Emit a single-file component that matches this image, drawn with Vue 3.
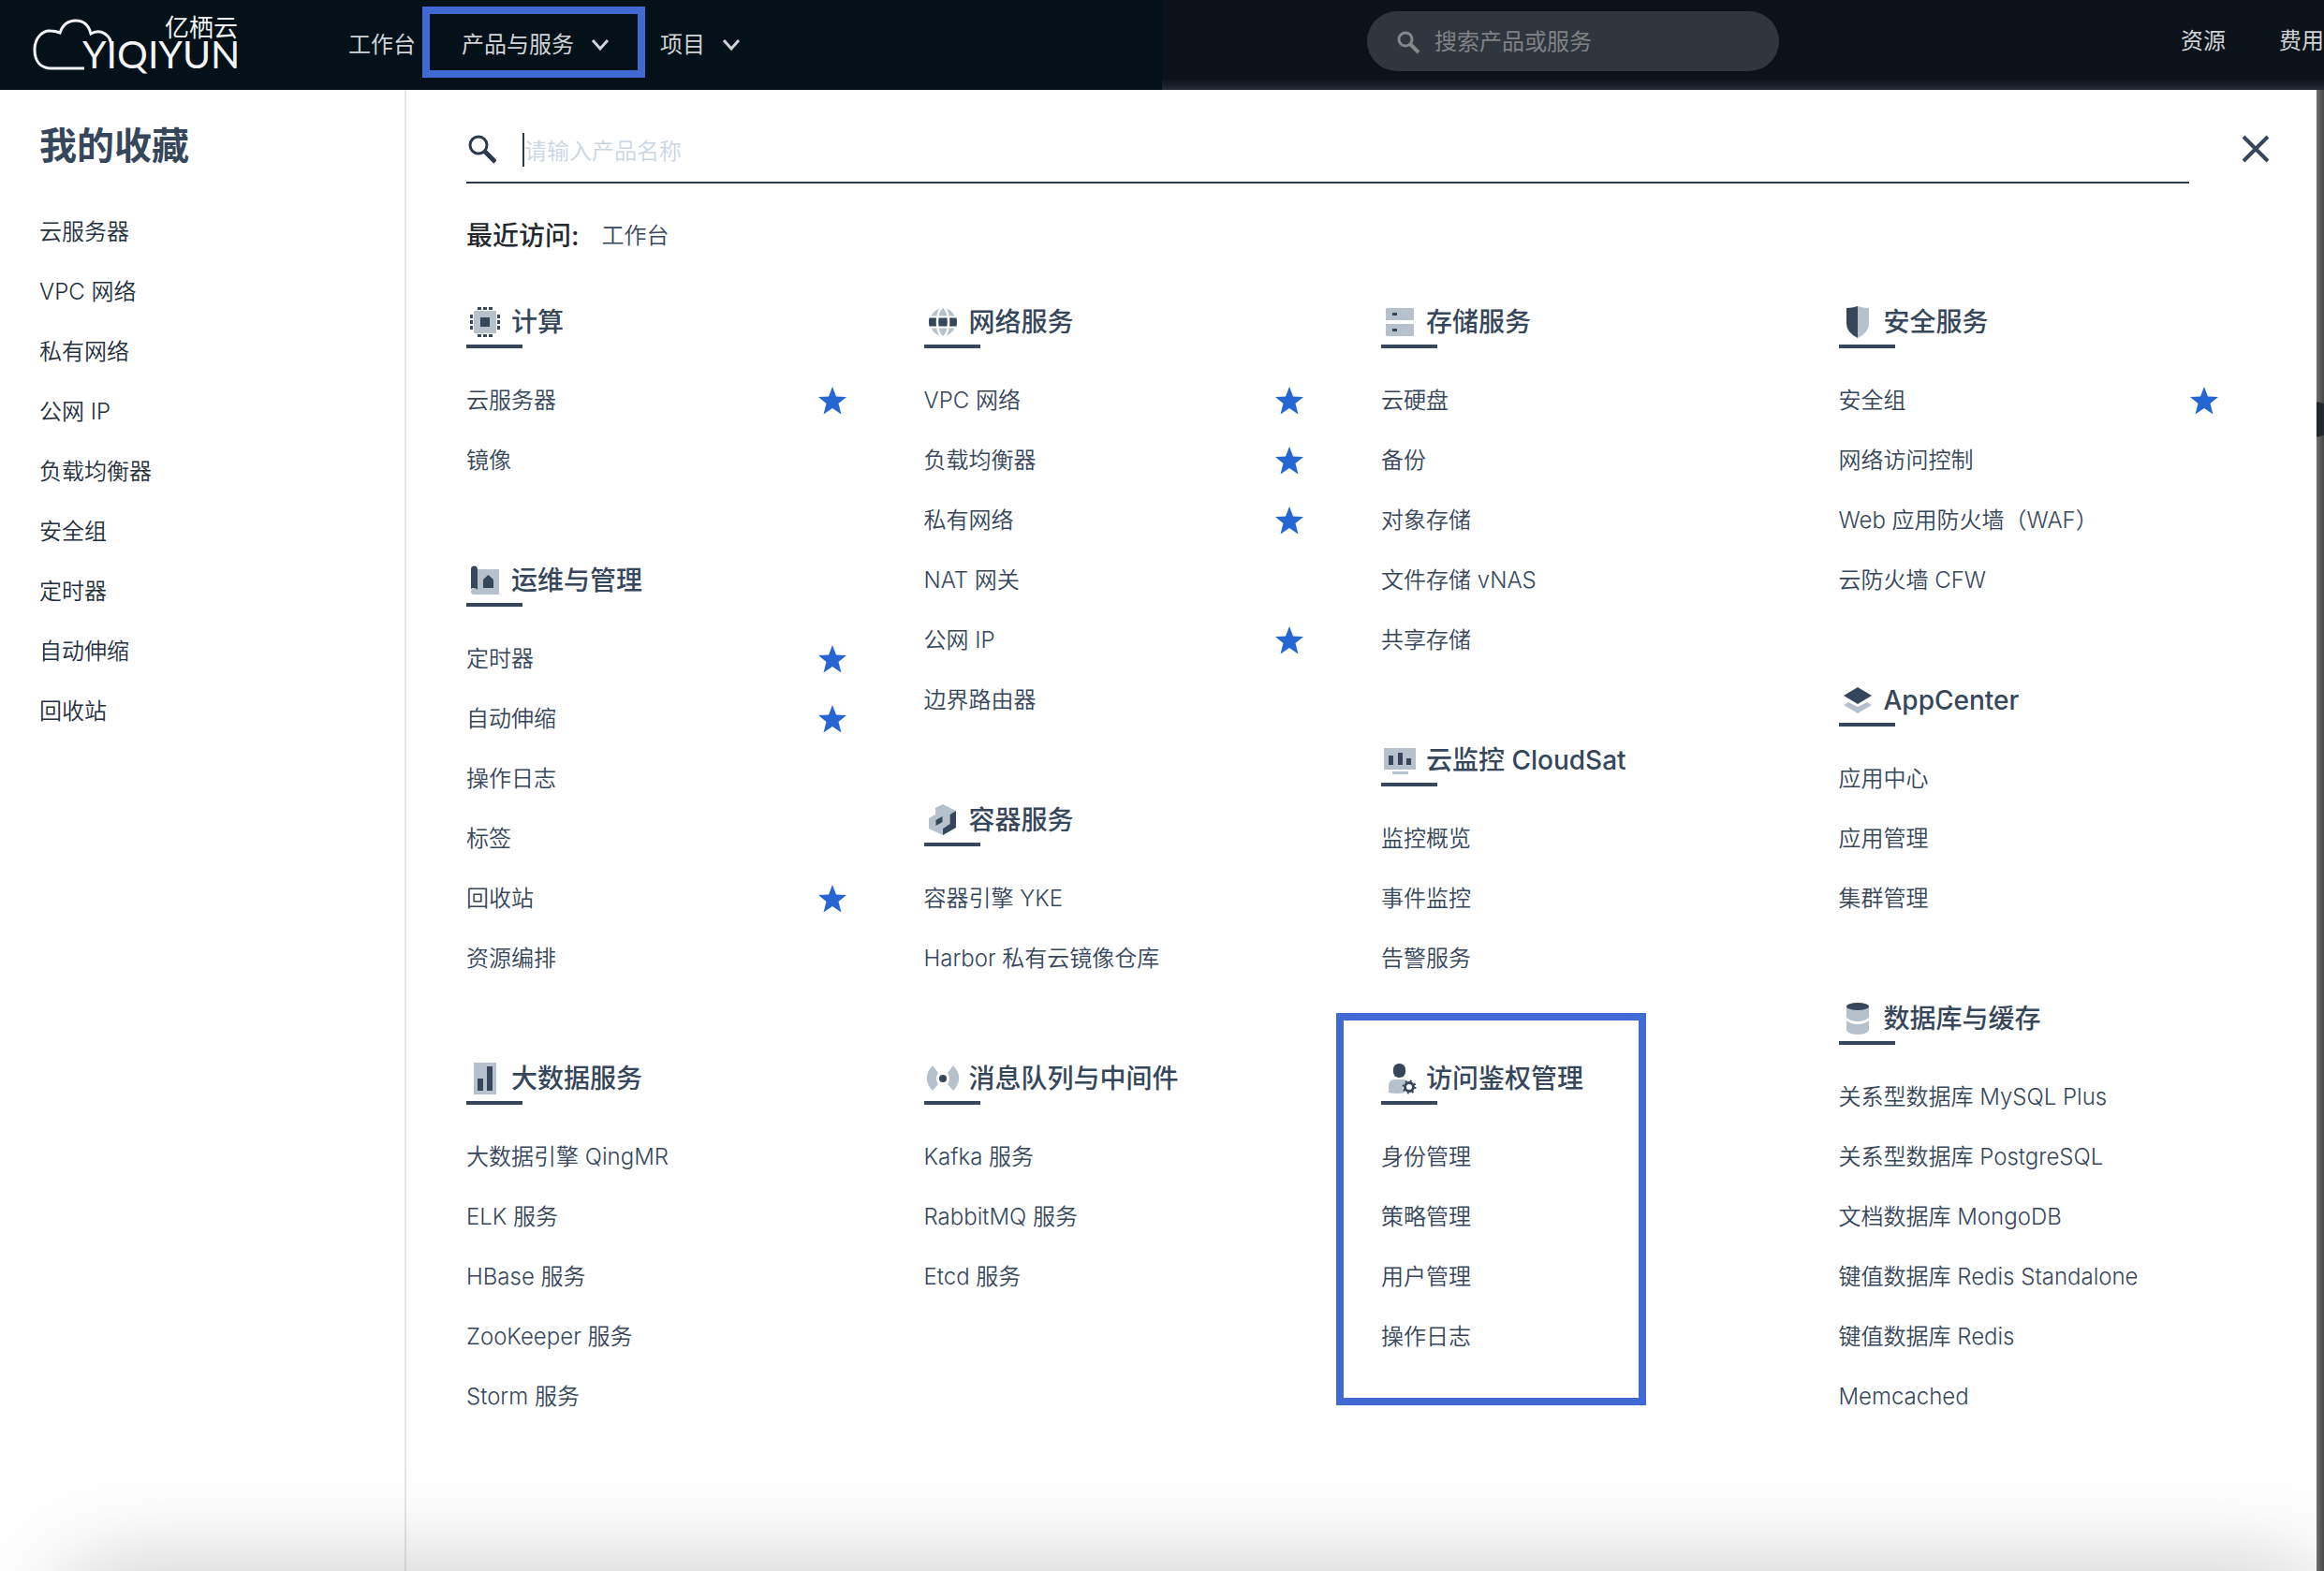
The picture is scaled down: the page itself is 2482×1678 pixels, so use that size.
<script setup>
import { ref } from 'vue'

const favorites = ['云服务器', 'VPC 网络', '私有网络', '公网 IP', '负载均衡器', '安全组', '定时器', '自动伸缩', '回收站']
const keyword = ref('')
const globalKeyword = ref('')

const columns = ref([
  [
    { icon: 'cpu', title: '计算', items: ['*云服务器', '镜像'] },
    { icon: 'ops', title: '运维与管理', items: ['*定时器', '*自动伸缩', '操作日志', '标签', '*回收站', '资源编排'] },
    { icon: 'bigdata', title: '大数据服务', items: ['大数据引擎 QingMR', 'ELK 服务', 'HBase 服务', 'ZooKeeper 服务', 'Storm 服务'] },
  ],
  [
    { icon: 'globe', title: '网络服务', items: ['*VPC 网络', '*负载均衡器', '*私有网络', 'NAT 网关', '*公网 IP', '边界路由器'] },
    { icon: 'container', title: '容器服务', items: ['容器引擎 YKE', 'Harbor 私有云镜像仓库'] },
    { icon: 'queue', title: '消息队列与中间件', items: ['Kafka 服务', 'RabbitMQ 服务', 'Etcd 服务'] },
  ],
  [
    { icon: 'storage', title: '存储服务', items: ['云硬盘', '备份', '对象存储', '文件存储 vNAS', '共享存储'] },
    { icon: 'monitor', title: '云监控 CloudSat', items: ['监控概览', '事件监控', '告警服务'] },
    { icon: 'user', title: '访问鉴权管理', items: ['身份管理', '策略管理', '用户管理', '操作日志'], marked: true },
  ],
  [
    { icon: 'shield', title: '安全服务', items: ['*安全组', '网络访问控制', 'Web 应用防火墙（WAF）', '云防火墙 CFW'] },
    { icon: 'layers', title: 'AppCenter', items: ['应用中心', '应用管理', '集群管理'] },
    { icon: 'database', title: '数据库与缓存', items: ['关系型数据库 MySQL Plus', '关系型数据库 PostgreSQL', '文档数据库 MongoDB', '键值数据库 Redis Standalone', '键值数据库 Redis', 'Memcached'] },
  ],
].map((column) => column.map((group) => ({
  ...group,
  items: group.items.map((text) => ({ name: text.replace('*', ''), starred: text.startsWith('*') })),
}))))
</script>

<template>
  <div class="page">
    <header class="topbar">
      <div class="brand-area">
        <a class="logo" href="#" aria-label="亿栖云">
          <svg width="224" height="96" viewBox="0 0 224 96" aria-hidden="true">
            <path d="M56 73H21C9 73 3 65 3 53C3 41 11 32 20 33Q25 33 30 35C33 26 39 22 47 22C56 22 61 28 63 36C73 30 85 37 85 50" fill="none" stroke="currentColor" stroke-width="3" />
            <text class="logo-latin" x="54" y="73">YIQIYUN</text>
            <text class="logo-cn" x="142" y="39">亿栖云</text>
          </svg>
        </a>
        <nav class="nav">
          <a href="#">工作台</a>
          <button class="nav-menu current" type="button">
            产品与服务
            <svg width="20" height="14" viewBox="0 0 20 14"><path d="M2 2l8 9 8-9" fill="none" stroke="currentColor" stroke-width="3" /></svg>
          </button>
          <button class="nav-menu" type="button">
            项目
            <svg width="20" height="14" viewBox="0 0 20 14"><path d="M2 2l8 9 8-9" fill="none" stroke="currentColor" stroke-width="3" /></svg>
          </button>
        </nav>
      </div>
      <div class="tools">
        <label class="global-search">
          <svg width="26" height="26" viewBox="0 0 26 26"><circle cx="9" cy="10" r="7" fill="none" stroke="currentColor" stroke-width="3" /><path d="M14 15l9 9" stroke="currentColor" stroke-width="4" /></svg>
          <input v-model="globalKeyword" type="text" placeholder="搜索产品或服务" aria-label="搜索产品或服务" />
        </label>
        <div class="links">
          <a href="#">资源</a>
          <a href="#">费用</a>
        </div>
      </div>
    </header>

    <div class="body">
      <div class="panel">
        <aside class="favorites">
          <h2>我的收藏</h2>
          <ul>
            <li v-for="name in favorites" :key="name"><a href="#">{{ name }}</a></li>
          </ul>
        </aside>

        <main class="catalog">
          <div class="search-row">
            <label class="product-search">
              <svg width="32" height="32" viewBox="0 0 32 32"><circle cx="13" cy="11" r="9" fill="none" stroke="currentColor" stroke-width="3" /><path d="M19 17l12 12" stroke="currentColor" stroke-width="5" /></svg>
              <span class="caret"></span>
              <input v-model="keyword" type="text" placeholder="请输入产品名称" aria-label="请输入产品名称" />
            </label>
            <button class="close" type="button" aria-label="关闭">
              <svg width="32" height="32" viewBox="0 0 32 32"><path d="M3 2l26 26M29 2L3 28" stroke="currentColor" stroke-width="4" /></svg>
            </button>
          </div>

          <p class="recent"><strong>最近访问:</strong><a href="#">工作台</a></p>

          <div class="columns">
            <div v-for="(column, index) in columns" :key="index" class="column">
              <section v-for="group in column" :key="group.title" class="group" :class="{ marked: group.marked }">
                <h3>
                  <svg class="icon" width="40" height="40" viewBox="0 0 40 40" aria-hidden="true">
                    <template v-if="group.icon === 'cpu'">
                      <path class="light" d="M8 8h24v24H8z" />
                      <path class="dark" d="M15 15h10v10H15zM12 4h4v3h-4zM18 4h4v3h-4zM24 4h4v3h-4zM12 33h4v3h-4zM18 33h4v3h-4zM24 33h4v3h-4zM4 12h3v4H4zM4 18h3v4H4zM4 24h3v4H4zM33 12h3v4h-3zM33 18h3v4h-3zM33 24h3v4h-3z" />
                    </template>
                    <template v-else-if="group.icon === 'ops'">
                      <path class="light" d="M11 8h24v27H8a3 3 0 0 1-3-3q0-3 3-4h3z" />
                      <path class="dark" d="M5 29V8a3.400 3.400 0 0 1 7 0v22q-1-2-4-2-2 0-3 1zM18 28v-9l5.500-5 5.500 5v9z" />
                    </template>
                    <template v-else-if="group.icon === 'bigdata'">
                      <path class="light" d="M8 3h24v34H8z" />
                      <path class="dark" d="M12 20h6v13h-6zM22 7h6v26h-6z" />
                    </template>
                    <template v-else-if="group.icon === 'globe'">
                      <path class="light" d="M16 5.500Q10 8 7.500 13.500h6Q14 9 16 5.500zM24 5.500q6 2.500 8.500 8h-6Q26 9 24 5.500zM20 5q-3.500 3-4.500 8.500h9Q23.500 8 20 5zM16 34.500Q10 32 7.500 26.500h6q.5 4.500 2.500 8zM24 34.500q6-2.500 8.500-8h-6q-.5 4.500-2.500 8zM20 35q-3.500-3-4.500-8.500h9Q23.500 32 20 35z" />
                      <path class="dark" d="M5.500 15.500H13q-.5 4.500 0 9H5.500q-1-4.500 0-9zM15.500 15.500h9q.5 4.500 0 9h-9q-.5-4.500 0-9zM27 15.500h7.500q1 4.500 0 9H27q.5-4.500 0-9z" />
                    </template>
                    <template v-else-if="group.icon === 'container'">
                      <path class="light" d="M20 3l14 7-6.500 4v10L20 29v7L5 29V18l7-4V7z" />
                      <path class="dark" d="M34 10v18l-14 8v-7l7.500-5V14zM12.500 20l7-4v6l-7 4z" />
                    </template>
                    <template v-else-if="group.icon === 'queue'">
                      <path class="light" d="M9 6q-12.500 13.500 0 27l6-7q-4.500-6 0-12zM31 6q12.500 13.500 0 27l-6-7q4.500-6 0-12z" />
                      <circle class="dark" cx="20" cy="20" r="4" />
                    </template>
                    <template v-else-if="group.icon === 'storage'">
                      <path class="light" d="M6 5h28l1 1v12H5V6zM5 22h30v12l-1 1H6l-1-1z" />
                      <path class="dark" d="M12 10h5v3h-5zM12 27h5v3h-5z" />
                    </template>
                    <template v-else-if="group.icon === 'monitor'">
                      <path class="light" d="M3 7h34v23H3zM12 32h17v3H12z" />
                      <path class="dark" d="M8 15h5v10H8zM18 12h5v13h-5zM27 18h5v7h-5z" />
                    </template>
                    <template v-else-if="group.icon === 'user'">
                      <path class="light" d="M8 35v-7q0-7 7-7h8q3 0 5 2-5 3-5 7 0 3 3 5-9 2-18 0z" />
                      <rect class="dark" x="13" y="4" width="13" height="15" rx="6" />
                      <circle cx="30" cy="29" r="4.500" fill="none" stroke="#36465b" stroke-width="3" />
                      <circle cx="30" cy="29" r="6.500" fill="none" stroke="#36465b" stroke-width="2" stroke-dasharray="2 3.100" />
                    </template>
                    <template v-else-if="group.icon === 'shield'">
                      <path class="light" d="M20 3q6 2 12 2v17q0 9-12 15z" />
                      <path class="dark" d="M20 3q-6 2-12 2v17q0 9 12 15z" />
                    </template>
                    <template v-else-if="group.icon === 'layers'">
                      <path class="light" d="M5 25l5-3 10 5 10-5 5 3-15 9z" />
                      <path class="dark" d="M20 6l15 9-15 9-15-9z" />
                    </template>
                    <template v-else>
                      <path class="light" d="M8 8h24v11q-5 4-12 4T8 19zM8 22q5 4 12 4t12-4v11q-4 4-12 4T8 33z" />
                      <ellipse class="dark" cx="20" cy="7" rx="12" ry="4" />
                    </template>
                  </svg>
                  {{ group.title }}
                </h3>
                <ul>
                  <li v-for="item in group.items" :key="item.name">
                    <a href="#">{{ item.name }}</a>
                    <button v-if="item.starred" class="star" type="button" :aria-label="'取消收藏 ' + item.name" @click="item.starred = false">
                      <svg width="32" height="32" viewBox="0 0 32 32"><path d="M16 1l4 10.500 11 .5-8.500 7 3 11.500L16 24l-9.500 6.500 3-11.500L1 12l11-.5z" fill="currentColor" /></svg>
                    </button>
                  </li>
                </ul>
              </section>
            </div>
          </div>
        </main>
      </div>
    </div>
  </div>
</template>

<style>
body {
  margin: 0;
}
</style>

<style scoped>
.page {
  display: flex;
  flex-direction: column;
  min-height: 100vh;
  overflow: hidden;
  font-family: Inter, "Noto Sans CJK SC", sans-serif;
  font-size: 24px;
  font-weight: 350;
  line-height: 32px;
  color: #36465b;
}
a {
  color: inherit;
  text-decoration: none;
  white-space: nowrap;
}
button {
  border: 0;
  padding: 0;
  background: none;
  color: inherit;
  font: inherit;
  cursor: pointer;
}
input {
  min-width: 0;
  flex: 1;
  border: 0;
  padding: 0;
  outline: 0;
  background: none;
  font: inherit;
  color: inherit;
}
ul {
  margin: 0;
  padding: 0;
  list-style: none;
}
svg {
  flex: none;
  display: block;
}

.topbar {
  display: flex;
  height: 96px;
  background: linear-gradient(#0b1219 88%, #252b35);
  color: #d0d3d6;
  font-weight: 400;
}
.brand-area {
  display: flex;
  align-items: center;
  box-sizing: border-box;
  width: 50%;
  padding-left: 34px;
  background: #041119;
}
.logo {
  color: #f2f4f5;
}
.logo-latin {
  font-family: Lato, sans-serif;
  font-size: 41px;
  fill: currentColor;
}
.logo-cn {
  font-family: "Noto Sans CJK SC", sans-serif;
  font-size: 26px;
  fill: currentColor;
}
.nav {
  display: flex;
  align-items: center;
  margin-left: 114px;
}
.nav-menu {
  display: flex;
  align-items: center;
  gap: 18px;
  margin-left: 16px;
  white-space: nowrap;
}
.nav-menu.current {
  box-sizing: border-box;
  width: 238px;
  height: 76px;
  margin: -6px 0 0 7px;
  padding: 6px 0 0 34px;
  border: 8px solid #4169d4;
}
.tools {
  display: flex;
  align-items: flex-start;
  justify-content: space-between;
  box-sizing: border-box;
  width: 50%;
  padding-left: 219px;
}
.global-search {
  display: flex;
  align-items: center;
  gap: 14px;
  box-sizing: border-box;
  width: 440px;
  height: 64px;
  margin-top: 12px;
  padding: 2px 32px 0;
  border-radius: 32px;
  background: #30363e;
  color: #858789;
}
.global-search input::placeholder {
  color: #808285;
  opacity: 1;
}
.links {
  display: flex;
  gap: 57px;
  margin-top: 28px;
}

.body {
  display: flex;
  flex: 1;
  padding-right: 8px;
  background:
    radial-gradient(circle at calc(100% - 8px) 352px, #20282f 0 18px, transparent 19px),
    linear-gradient(to left, #454545, #6e6f70 8px);
}
.panel {
  position: relative;
  display: flex;
  flex: 1;
  overflow: hidden;
  background: #fff;
}
.panel::after {
  content: "";
  position: absolute;
  top: 100%;
  left: 72px;
  right: 0;
  height: 200px;
  box-shadow: 0 0 110px rgba(0, 0, 0, 0.22);
  pointer-events: none;
}
.favorites {
  flex: none;
  box-sizing: border-box;
  width: 434px;
  padding: 32px 42px;
  border-right: 2px solid #e2e7ee;
  color: #24303e;
}
.favorites h2 {
  margin: 0 0 32px;
  font-size: 40px;
  font-weight: 600;
  line-height: 56px;
  color: #36465b;
}
.favorites li,
.group li {
  display: flex;
  align-items: center;
  justify-content: space-between;
  height: 64px;
}
.catalog {
  flex: 1;
  min-width: 0;
  padding: 28px 102px 0 64px;
}
.search-row {
  display: flex;
  align-items: center;
  gap: 51px;
  margin-right: -57px;
}
.product-search {
  display: flex;
  flex: 1;
  align-items: center;
  height: 68px;
  padding-top: 2px;
  border-bottom: 2px solid #2c3a4b;
  color: #2c3a4b;
}
.caret {
  width: 2px;
  height: 36px;
  margin-left: 28px;
  background: #2c3a4b;
}
.product-search input {
  padding-top: 4px;
}
.product-search input::placeholder {
  color: #cbd6e3;
  opacity: 1;
}
.close {
  display: flex;
  justify-content: center;
  width: 40px;
}
.recent {
  display: flex;
  align-items: center;
  gap: 24px;
  margin: 36px 0 52px;
  line-height: 40px;
}
.recent strong {
  font-size: 28px;
  font-weight: 500;
  color: #24282d;
}
.columns {
  display: grid;
  grid-template-columns: repeat(4, minmax(0, 1fr));
  column-gap: 80px;
}
.column {
  display: flex;
  flex-direction: column;
  gap: 76px;
}
.group {
  position: relative;
}
.group.marked::before {
  content: "";
  position: absolute;
  inset: -50px auto -41px -48px;
  box-sizing: border-box;
  width: 331px;
  border: 8px solid #4169d4;
  pointer-events: none;
}
.group h3 {
  display: flex;
  align-items: center;
  gap: 8px;
  position: relative;
  margin: 0 0 24px;
  padding-bottom: 8px;
  font-size: 28px;
  font-weight: 500;
  line-height: 40px;
  white-space: nowrap;
}
.group h3::after {
  content: "";
  position: absolute;
  bottom: 0;
  left: 0;
  width: 60px;
  height: 4px;
  background: #36465b;
}
.light {
  fill: #b7c1cc;
}
.dark {
  fill: #36465b;
}
.star {
  margin-right: 2px;
  color: #2666d2;
}
</style>
